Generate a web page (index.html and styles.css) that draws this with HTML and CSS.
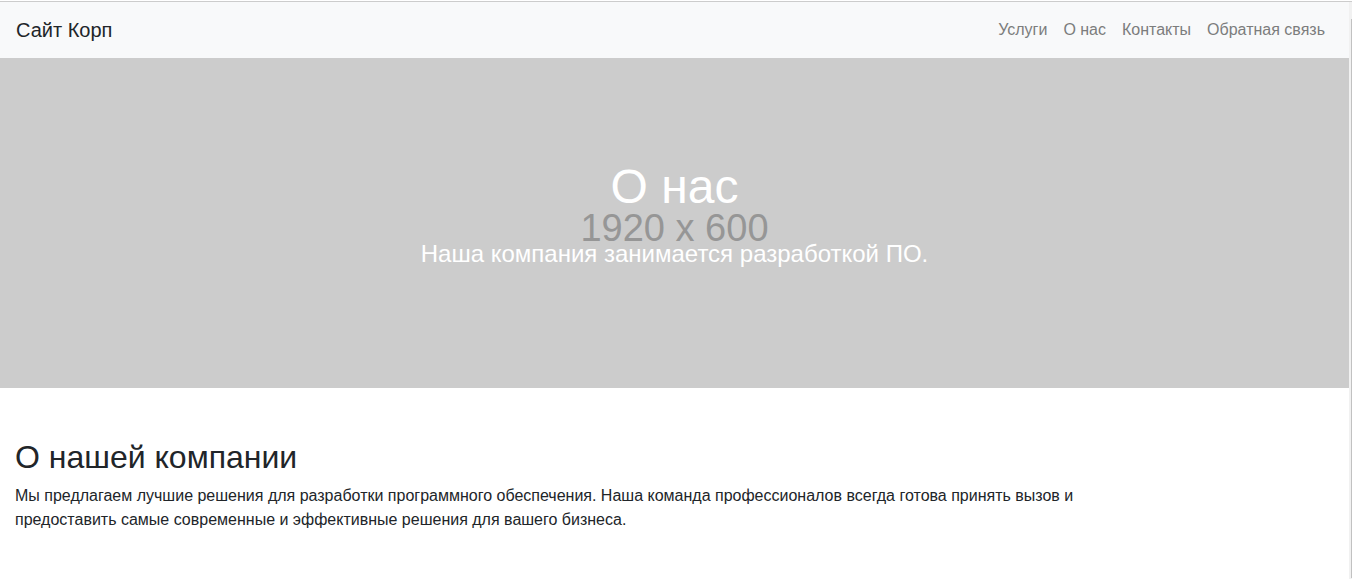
FILE: index.html
```html
<!DOCTYPE html>
<html lang="ru">
<head>
<meta charset="utf-8">
<title>Сайт Корп</title>
<link rel="stylesheet" href="styles.css">
</head>
<body>
<div class="window">
  <div class="page">
    <header class="navbar">
      <a class="brand" href="#">Сайт Корп</a>
      <nav class="nav">
        <a href="#services">Услуги</a>
        <a href="#about">О нас</a>
        <a href="#contacts">Контакты</a>
        <a href="#feedback">Обратная связь</a>
      </nav>
    </header>
    <section class="hero">
      <span class="hero-size">1920 x 600</span>
      <h1>О нас</h1>
      <p>Наша компания занимается разработкой ПО.</p>
    </section>
    <main class="content" id="about">
      <h2>О нашей компании</h2>
      <p>Мы предлагаем лучшие решения для разработки программного обеспечения. Наша команда профессионалов всегда готова принять вызов и предоставить самые современные и эффективные решения для вашего бизнеса.</p>
    </main>
  </div>
  <div class="scrollbar"><div class="thumb"></div></div>
</div>
</body>
</html>
```
FILE: styles.css
```css
* { box-sizing: border-box; }
body {
  display: flex;
  flex-direction: column;
  min-height: 100vh;
  margin: 0;
  padding-top: 1px;
  background: #fff;
  color: #212529;
  font: 16px/24px "Liberation Sans", Arial, sans-serif;
}
h1, h2, p { margin: 0; font-weight: 400; }
a { text-decoration: none; }
.window {
  display: flex;
  flex: 1;
  border-top: 1px solid #ccc;
}
.page { flex: 1; }
.scrollbar {
  display: flex;
  width: 3px;
  padding: 17px 0 4px 2px;
  background: #f1f1f1;
}
.thumb { flex: 1; background: #c1c1c1; }
.navbar {
  display: flex;
  justify-content: space-between;
  align-items: center;
  padding: 8px 16px;
  background: #f8f9fa;
}
.brand {
  padding: 5px 0;
  color: #212529;
  font-size: 20px;
  line-height: 30px;
}
.nav { display: flex; }
.nav a { padding: 8px; color: #7c7d7d; }
.hero {
  position: relative;
  padding: 100px 16px 116px;
  background: #ccc;
  color: #fff;
  text-align: center;
}
.hero h1 {
  position: relative;
  margin-bottom: 20px;
  font-size: 48px;
  line-height: 58px;
}
.hero p { position: relative; font-size: 24px; line-height: 36px; }
.hero-size {
  position: absolute;
  inset: 0;
  display: flex;
  align-items: center;
  justify-content: center;
  padding-top: 10px;
  color: #969696;
  font-size: 38px;
}
.content { max-width: 1110px; padding: 50px 15px; }
.content h2 { margin-bottom: 8px; font-size: 32px; line-height: 38px; }
```
